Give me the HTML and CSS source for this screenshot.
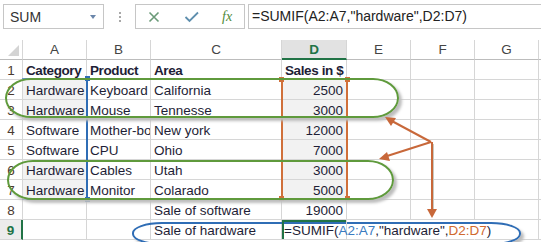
FILE: index.html
```html
<!DOCTYPE html>
<html lang="en">
<head>
    <meta charset="UTF-8">
    <meta name="viewport" content="width=device-width, initial-scale=1.0">
    <link rel="stylesheet" href="styles.css">
</head>
<body>
<div class="page">
    <div class="toolbar">
        <div class="namebox"><span>SUM</span><span class="caret"></span></div>
        <div class="grip"><i></i><i></i><i></i></div>
        <div class="fbtns">
            <svg width="12" height="12" viewBox="0 0 12 12"><path d="M1.5 1.5 L10.5 10.5 M10.5 1.5 L1.5 10.5" stroke="#6a9a78" stroke-width="1.6" fill="none"/></svg>
            <svg width="16" height="12" viewBox="0 0 16 12"><path d="M1.5 6 L5.5 10 L14 1.5" stroke="#5f8fae" stroke-width="1.8" fill="none"/></svg>
            <span class="fx">fx</span>
        </div>
        <div class="fbar">=SUMIF(A2:A7,"hardware",D2:D7)</div>
    </div>

    <div class="grid">
        <div class="cell corner"><span class="tri"></span></div>
        <div class="cell ch">A</div>
        <div class="cell ch">B</div>
        <div class="cell ch">C</div>
        <div class="cell ch active">D</div>
        <div class="cell ch">E</div>
        <div class="cell ch">F</div>
        <div class="cell ch">G</div>
        <div class="cell ch"></div>

        <div class="cell rh">1</div>
        <div class="cell b">Category</div>
        <div class="cell b">Product</div>
        <div class="cell b">Area</div>
        <div class="cell b">Sales in $</div>
        <div class="cell"></div><div class="cell"></div><div class="cell"></div><div class="cell"></div>

        <div class="cell rh">2</div>
        <div class="cell hit">Hardware</div>
        <div class="cell">Keyboard</div>
        <div class="cell">California</div>
        <div class="cell num hit">2500</div>
        <div class="cell"></div><div class="cell"></div><div class="cell"></div><div class="cell"></div>

        <div class="cell rh">3</div>
        <div class="cell hit">Hardware</div>
        <div class="cell">Mouse</div>
        <div class="cell">Tennesse</div>
        <div class="cell num hit">3000</div>
        <div class="cell"></div><div class="cell"></div><div class="cell"></div><div class="cell"></div>

        <div class="cell rh">4</div>
        <div class="cell">Software</div>
        <div class="cell">Mother-board</div>
        <div class="cell">New york</div>
        <div class="cell num hit">12000</div>
        <div class="cell"></div><div class="cell"></div><div class="cell"></div><div class="cell"></div>

        <div class="cell rh">5</div>
        <div class="cell">Software</div>
        <div class="cell">CPU</div>
        <div class="cell">Ohio</div>
        <div class="cell num hit">7000</div>
        <div class="cell"></div><div class="cell"></div><div class="cell"></div><div class="cell"></div>

        <div class="cell rh">6</div>
        <div class="cell hit">Hardware</div>
        <div class="cell">Cables</div>
        <div class="cell">Utah</div>
        <div class="cell num hit">3000</div>
        <div class="cell"></div><div class="cell"></div><div class="cell"></div><div class="cell"></div>

        <div class="cell rh">7</div>
        <div class="cell hit">Hardware</div>
        <div class="cell">Monitor</div>
        <div class="cell">Colarado</div>
        <div class="cell num hit">5000</div>
        <div class="cell"></div><div class="cell"></div><div class="cell"></div><div class="cell"></div>

        <div class="cell rh">8</div>
        <div class="cell"></div>
        <div class="cell"></div>
        <div class="cell">Sale of software</div>
        <div class="cell num">19000</div>
        <div class="cell"></div><div class="cell"></div><div class="cell"></div><div class="cell"></div>

        <div class="cell rh active-row">9</div>
        <div class="cell"></div>
        <div class="cell"></div>
        <div class="cell">Sale of hardware</div>
        <div class="cell sel">=SUMIF(<span class="ref-a">A2:A7</span>,"hardware",<span class="ref-d">D2:D7</span>)</div>
        <div class="cell spill"></div><div class="cell spill"></div><div class="cell"></div><div class="cell"></div>
    </div>

    <!-- range highlights -->
    <div class="range range-a"><i class="h tr"></i><i class="h br"></i></div>
    <div class="range range-d"><i class="h tl"></i><i class="h tr"></i><i class="h bl"></i><i class="h br"></i></div>

    <!-- callout shapes -->
    <div class="ring ring-1"></div>
    <div class="ring ring-2"></div>
    <div class="ring ring-blue"></div>

    <svg class="arrows" width="541" height="242" viewBox="0 0 541 242">
        <line x1="433" y1="144" x2="433" y2="212" stroke="#c9c9c0" stroke-width="2"/>
        <g stroke="#c8683a" stroke-width="2" fill="#c8683a">
            <line x1="431" y1="142" x2="390" y2="120"/>
            <line x1="431" y1="142" x2="384" y2="157"/>
            <line x1="432" y1="142" x2="432" y2="212"/>
        </g>
        <g fill="#c8683a">
            <polygon points="385,117 396,118 391,126"/>
            <polygon points="379,159 387,152 390,161"/>
            <polygon points="432,218 427,209 437,209"/>
        </g>
    </svg>
</div>
</body>
</html>
```

FILE: styles.css
```css
html, body {
    margin: 0;
    height: 242px;
    overflow: hidden;
    background: #fff;
}
.page {
    position: relative;
    width: 541px;
    height: 242px;
    overflow: hidden;
    font-family: "Liberation Sans", Arial, sans-serif;
    color: #1e1e36;
}

/* formula bar */
.toolbar {
    display: flex;
    padding-top: 4px;
    height: 25px;
}
.namebox {
    margin-left: 3px;
    width: 101px;
    box-sizing: border-box;
    border: 1px solid #c6c6c6;
    display: flex;
    align-items: center;
    justify-content: space-between;
    padding: 0 7px 0 6px;
    font-size: 14px;
    color: #333;
}
.caret {
    width: 0;
    height: 0;
    border-left: 3px solid transparent;
    border-right: 3px solid transparent;
    border-top: 4px solid #6a86aa;
}
.grip {
    width: 31px;
    display: flex;
    flex-direction: column;
    align-items: center;
    justify-content: center;
    gap: 2px;
}
.grip i {
    width: 2px;
    height: 2px;
    background: #a8a8a8;
}
.fbtns {
    width: 110px;
    box-sizing: border-box;
    border: 1px solid #c6c6c6;
    display: flex;
    align-items: center;
    padding-left: 12px;
    gap: 24px;
}
.fx {
    font-family: "Liberation Serif", serif;
    font-style: italic;
    font-size: 14px;
    color: #4f8a3a;
    margin-left: -2px;
}
.fbar {
    flex: 1;
    margin-left: 3px;
    border: 1px solid #c6c6c6;
    border-right: none;
    padding-left: 3px;
    font-size: 14px;
    line-height: 23px;
    color: #222;
    white-space: nowrap;
}

/* sheet */
.grid {
    margin-top: 11px;
    width: 541px;
    display: grid;
    grid-template-columns: 23px 64px 64px 131px 65px 64px 64px 64px 1fr;
    font-size: 13.5px;
}
.cell {
    box-sizing: border-box;
    height: 20px;
    border-right: 1px solid #d6d6d6;
    border-bottom: 1px solid #d6d6d6;
    padding: 3px 2px 0 3px;
    line-height: 16px;
    white-space: nowrap;
    overflow: hidden;
}
.ch {
    text-align: center;
    color: #444;
    padding: 2px 0 0;
    border-bottom-color: #bcbcbc;
}
.ch.active {
    background: #e2e2e2;
    color: #217346;
    font-weight: bold;
    border-bottom: 2px solid #217346;
}
.corner {
    display: flex;
    justify-content: flex-end;
    align-items: flex-end;
    padding: 0 3px 3px 0;
    border-bottom-color: #bcbcbc;
}
.tri {
    width: 0;
    height: 0;
    border-left: 11px solid transparent;
    border-bottom: 11px solid #d4d4d4;
}
.rh {
    text-align: center;
    color: #4a3a30;
    padding: 3px 0 0;
}
.rh.active-row {
    background: #ececec;
    color: #217346;
    font-weight: bold;
    border-right: 2px solid #217346;
}
.b {
    font-weight: bold;
    letter-spacing: -0.4px;
}
.num {
    text-align: right;
    padding-right: 3px;
}
.hit {
    background: #f2f2f2;
}
.sel {
    overflow: visible;
    position: relative;
    z-index: 1;
    padding-left: 2px;
    box-shadow: inset 2px 2px 0 #217346;
}
.ref-a {
    color: #3a7bc0;
}
.ref-d {
    color: #d0692e;
}
.spill {
    border-right-color: transparent;
}

/* overlays */
.range {
    position: absolute;
    box-sizing: border-box;
}
.range-a {
    left: 22px;
    top: 78px;
    width: 66px;
    height: 122px;
    border-top: 1px solid #6a94c8;
    border-bottom: 1px solid #6a94c8;
    border-right: 2px solid #2f6db5;
}
.range-d {
    left: 281px;
    top: 78px;
    width: 67px;
    height: 122px;
    border: 2px solid #d0703a;
}
.h {
    position: absolute;
    width: 5px;
    height: 5px;
}
.range-a .h { background: #2f6db5; }
.range-d .h { background: #d0703a; }
.tr { right: -4px; top: -3px; }
.br { right: -4px; bottom: -3px; }
.tl { left: -4px; top: -3px; }
.bl { left: -4px; bottom: -3px; }

.ring {
    position: absolute;
    box-sizing: border-box;
    border: 2px solid #5f9a3c;
    border-radius: 26px / 20px;
    box-shadow: 3px 3px 3px #bdbdbd;
}
.ring-1 {
    left: 5px;
    top: 78px;
    width: 394px;
    height: 40px;
}
.ring-2 {
    left: 7px;
    top: 160px;
    width: 387px;
    height: 40px;
}
.ring-blue {
    left: 132px;
    top: 222px;
    width: 389px;
    height: 23px;
    border-color: #2f6db5;
    border-radius: 30px / 11px;
}
.arrows {
    position: absolute;
    left: 0;
    top: 0;
}
```
